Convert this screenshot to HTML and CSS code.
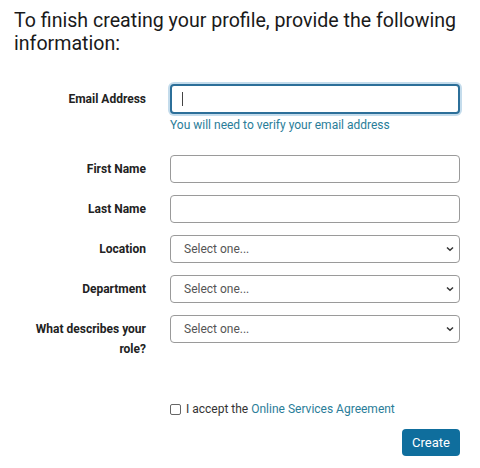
FILE: index.html
```html
<!DOCTYPE html>
<html>
<head>
<meta charset="utf-8">
<link rel="stylesheet" href="styles.css">
</head>
<body>
<div class="page">
  <h1 class="title">To finish creating your profile, provide the following information:</h1>
  <form class="form">
    <div class="row row-email">
      <label class="label">Email Address</label>
      <div class="control">
        <div class="input input-focus"><span class="caret"></span></div>
        <div class="help">You will need to verify your email address</div>
      </div>
    </div>
    <div class="row">
      <label class="label">First Name</label>
      <div class="control"><div class="input"></div></div>
    </div>
    <div class="row">
      <label class="label">Last Name</label>
      <div class="control"><div class="input"></div></div>
    </div>
    <div class="row">
      <label class="label">Location</label>
      <div class="control"><div class="input select"><span>Select one...</span><svg class="chev" width="8" height="6" viewBox="0 0 8 6"><path d="M1 1.5 L4 4.3 L7 1.5" fill="none" stroke="#333" stroke-width="1.5"/></svg></div></div>
    </div>
    <div class="row">
      <label class="label">Department</label>
      <div class="control"><div class="input select"><span>Select one...</span><svg class="chev" width="8" height="6" viewBox="0 0 8 6"><path d="M1 1.5 L4 4.3 L7 1.5" fill="none" stroke="#333" stroke-width="1.5"/></svg></div></div>
    </div>
    <div class="row">
      <label class="label">What describes your<br>role?</label>
      <div class="control"><div class="input select"><span>Select one...</span><svg class="chev" width="8" height="6" viewBox="0 0 8 6"><path d="M1 1.5 L4 4.3 L7 1.5" fill="none" stroke="#333" stroke-width="1.5"/></svg></div></div>
    </div>
    <div class="agree">
      <span class="checkbox"></span>
      <span class="agree-text">I accept the <a class="link">Online Services Agreement</a></span>
    </div>
    <div class="actions">
      <button type="button" class="btn">Create</button>
    </div>
  </form>
</div>
</body>
</html>
```
FILE: styles.css
```css
html, body {
  margin: 0;
  padding: 0;
  background: #ffffff;
}
body {
  font-family: Roboto, "Noto Sans", Arial, sans-serif;
  color: #222;
}
.page {
  padding: 9px 0 0 14px;
  width: 466px;
}
.title {
  margin: 0;
  font-size: 19.6px;
  line-height: 23px;
  font-weight: 400;
  color: #1a1a1a;
}
.form {
  margin-top: 29px;
}
.row {
  display: grid;
  grid-template-columns: 132px 290px;
  column-gap: 24px;
  margin-bottom: 12px;
}
.row-email {
  margin-bottom: 23px;
}
.label {
  text-align: right;
  font-size: 12px;
  font-weight: 700;
  line-height: 20px;
  padding-top: 4px;
  color: #222;
}
.row-email .label {
  padding-top: 5px;
}
.input {
  box-sizing: border-box;
  height: 28px;
  border: 1px solid #9a9a9a;
  border-radius: 4px;
  background: #fff;
  display: flex;
  align-items: center;
}
.input-focus {
  height: 30px;
  border: 2px solid #2c6f99;
  box-shadow: 0 0 0 2px #c4dcec;
}
.caret {
  display: block;
  width: 1px;
  height: 14px;
  background: #444;
  margin-left: 10px;
}
.help {
  font-size: 12px;
  line-height: 14px;
  margin-top: 4px;
  color: #2a7d99;
}
.select {
  justify-content: space-between;
  padding: 0 5px 0 13px;
  font-size: 12px;
  color: #555;
}
.chev {
  display: block;
}
.agree {
  display: flex;
  align-items: center;
  margin-left: 156px;
  margin-top: 43px;
}
.checkbox {
  box-sizing: border-box;
  width: 11px;
  height: 11px;
  border: 1px solid #666;
  border-radius: 2px;
  margin-right: 5px;
}
.agree-text {
  font-size: 12px;
  line-height: 14px;
  color: #333;
}
.link {
  color: #2a7d99;
  text-decoration: none;
}
.actions {
  display: flex;
  justify-content: flex-end;
  width: 446px;
  margin-top: 13px;
}
.btn {
  font-family: Roboto, "Noto Sans", Arial, sans-serif;
  font-size: 13px;
  color: #fff;
  background: #0f6e9d;
  border: 0;
  border-radius: 4px;
  width: 58px;
  height: 27px;
  padding: 0;
}
```
